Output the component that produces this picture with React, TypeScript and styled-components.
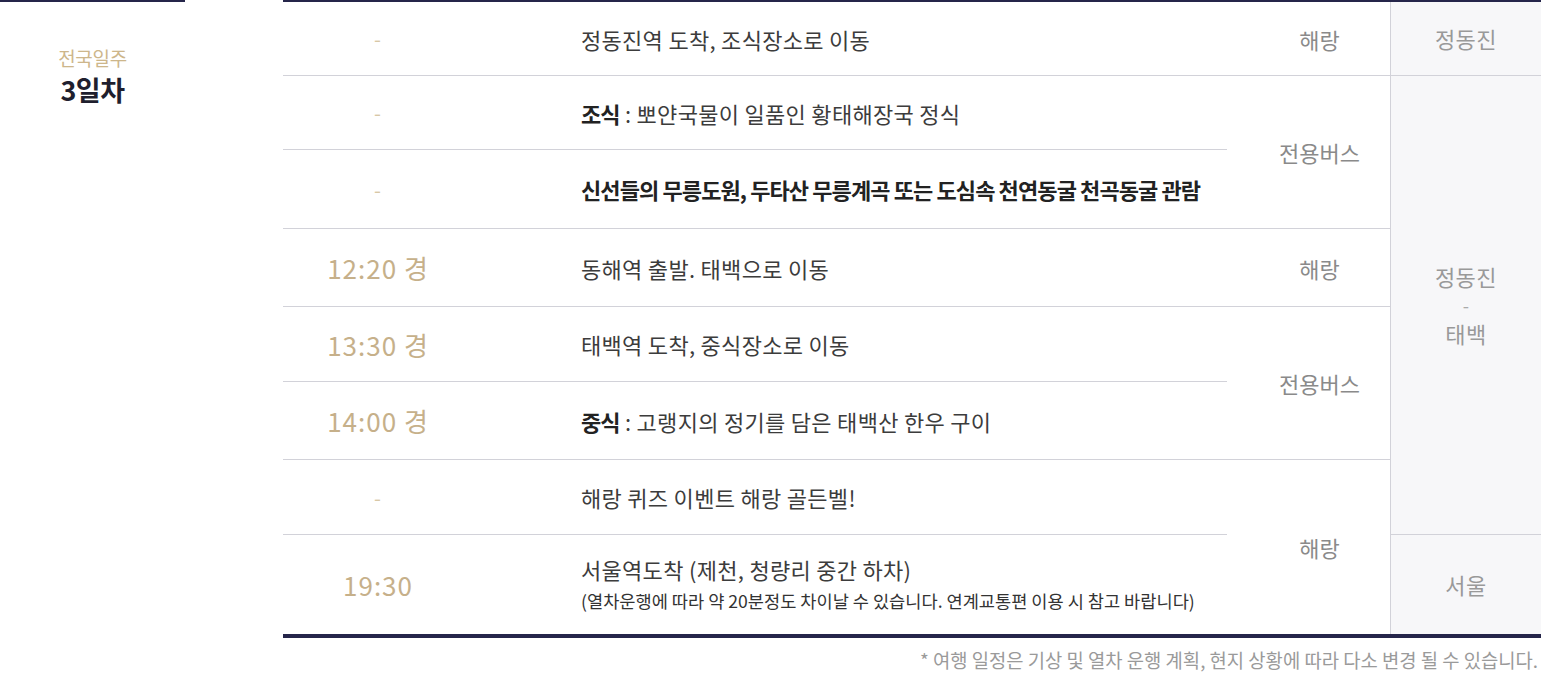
import React from "react";
import styled, { createGlobalStyle } from "styled-components";

const Global = createGlobalStyle`
  html, body { margin: 0; padding: 0; background: #fff; }
  body { font-family: "Noto Sans CJK KR", "Noto Sans", sans-serif; }
`;

const Page = styled.div`
  display: flex;
  width: 1549px;
`;

const Side = styled.div`
  width: 283px;
  flex: none;
`;

const SideHead = styled.div`
  width: 185px;
  border-top: 2px solid #25254a;
  padding-top: 42px;
  display: flex;
  flex-direction: column;
  align-items: center;
`;

const SideSub = styled.div`
  font-size: 19px;
  line-height: 28px;
  color: #cdb68b;
  letter-spacing: -0.3px;
`;

const SideTitle = styled.div`
  font-size: 27px;
  line-height: 36px;
  font-weight: 700;
  color: #1f1f2e;
  letter-spacing: -0.5px;
`;

const Main = styled.div`
  width: 1258px;
  flex: none;
`;

const Table = styled.table`
  width: 1258px;
  table-layout: fixed;
  border-collapse: separate;
  border-spacing: 0;
  border-top: 2px solid #25254a;
  border-bottom: 4px solid #25254a;
`;

const Row = styled.tr<{ $h: number }>`
  height: ${(p) => p.$h}px;
`;

const Cell = styled.td<{ $line?: boolean }>`
  padding: 0;
  box-sizing: border-box;
  vertical-align: middle;
  border-bottom: ${(p) => (p.$line ? "1px solid #d2d2d9" : "none")};
`;

const TimeCell = styled(Cell)<{ $dash?: boolean }>`
  text-align: center;
  font-size: ${(p) => (p.$dash ? "20px" : "26px")};
  color: ${(p) => (p.$dash ? "#d8c8a6" : "#c6b08a")};
  letter-spacing: 1px;
`;

const DescCell = styled(Cell)`
  padding-left: 108px;
  font-size: 22px;
  line-height: 32px;
  color: #3c3c3c;
  letter-spacing: 0.3px;
`;

const Strong = styled.b`
  font-weight: 700;
  color: #222;
  letter-spacing: -0.9px;
`;

const SubNote = styled.div`
  font-size: 17.6px;
  line-height: 31px;
  color: #333;
  letter-spacing: 0;
`;

const TransCell = styled(Cell)`
  text-align: center;
  padding-left: 22px;
  font-size: 22px;
  line-height: 30px;
  color: #8a8a8a;
`;

const PlaceCell = styled(Cell)`
  text-align: center;
  background: #f7f7f9;
  border-left: 1px solid #d2d2d9;
  font-size: 22px;
  line-height: 31px;
  color: #999;
  letter-spacing: 0.5px;
`;

const Dash = styled.div`
  font-size: 18px;
  line-height: 26px;
  color: #aaa;
`;

const Note = styled.div`
  text-align: right;
  padding: 8px 3px 0 0;
  font-size: 18.8px;
  line-height: 28px;
  color: #9a9a9a;
  letter-spacing: 0;
`;

export default function App() {
  return (
    <>
      <Global />
      <Page>
        <Side>
          <SideHead>
            <SideSub>전국일주</SideSub>
            <SideTitle>3일차</SideTitle>
          </SideHead>
        </Side>
        <Main>
          <Table>
            <colgroup>
              <col style={{ width: 190 }} />
              <col style={{ width: 754 }} />
              <col style={{ width: 163 }} />
              <col style={{ width: 151 }} />
            </colgroup>
            <tbody>
              <Row $h={74}>
                <TimeCell $line $dash>-</TimeCell>
                <DescCell $line>정동진역 도착, 조식장소로 이동</DescCell>
                <TransCell $line>해랑</TransCell>
                <PlaceCell $line>정동진</PlaceCell>
              </Row>
              <Row $h={74}>
                <TimeCell $line $dash>-</TimeCell>
                <DescCell $line>
                  <Strong>조식</Strong> : 뽀얀국물이 일품인 황태해장국 정식
                </DescCell>
                <TransCell $line rowSpan={2}>전용버스</TransCell>
                <PlaceCell $line rowSpan={6}>
                  정동진
                  <Dash>-</Dash>
                  태백
                </PlaceCell>
              </Row>
              <Row $h={79}>
                <TimeCell $line $dash>-</TimeCell>
                <DescCell $line>
                  <Strong>신선들의 무릉도원, 두타산 무릉계곡 또는 도심속 천연동굴 천곡동굴 관람</Strong>
                </DescCell>
              </Row>
              <Row $h={78}>
                <TimeCell $line>12:20 경</TimeCell>
                <DescCell $line>동해역 출발. 태백으로 이동</DescCell>
                <TransCell $line>해랑</TransCell>
              </Row>
              <Row $h={75}>
                <TimeCell $line>13:30 경</TimeCell>
                <DescCell $line>태백역 도착, 중식장소로 이동</DescCell>
                <TransCell $line rowSpan={2}>전용버스</TransCell>
              </Row>
              <Row $h={78}>
                <TimeCell $line>14:00 경</TimeCell>
                <DescCell $line>
                  <Strong>중식</Strong> : 고랭지의 정기를 담은 태백산 한우 구이
                </DescCell>
              </Row>
              <Row $h={75}>
                <TimeCell $line $dash>-</TimeCell>
                <DescCell $line>해랑 퀴즈 이벤트 해랑 골든벨!</DescCell>
                <TransCell rowSpan={2}>해랑</TransCell>
              </Row>
              <Row $h={99}>
                <TimeCell>19:30</TimeCell>
                <DescCell>
                  서울역도착 (제천, 청량리 중간 하차)
                  <SubNote>(열차운행에 따라 약 20분정도 차이날 수 있습니다. 연계교통편 이용 시 참고 바랍니다)</SubNote>
                </DescCell>
                <PlaceCell>서울</PlaceCell>
              </Row>
            </tbody>
          </Table>
          <Note>* 여행 일정은 기상 및 열차 운행 계획, 현지 상황에 따라 다소 변경 될 수 있습니다.</Note>
        </Main>
      </Page>
    </>
  );
}
